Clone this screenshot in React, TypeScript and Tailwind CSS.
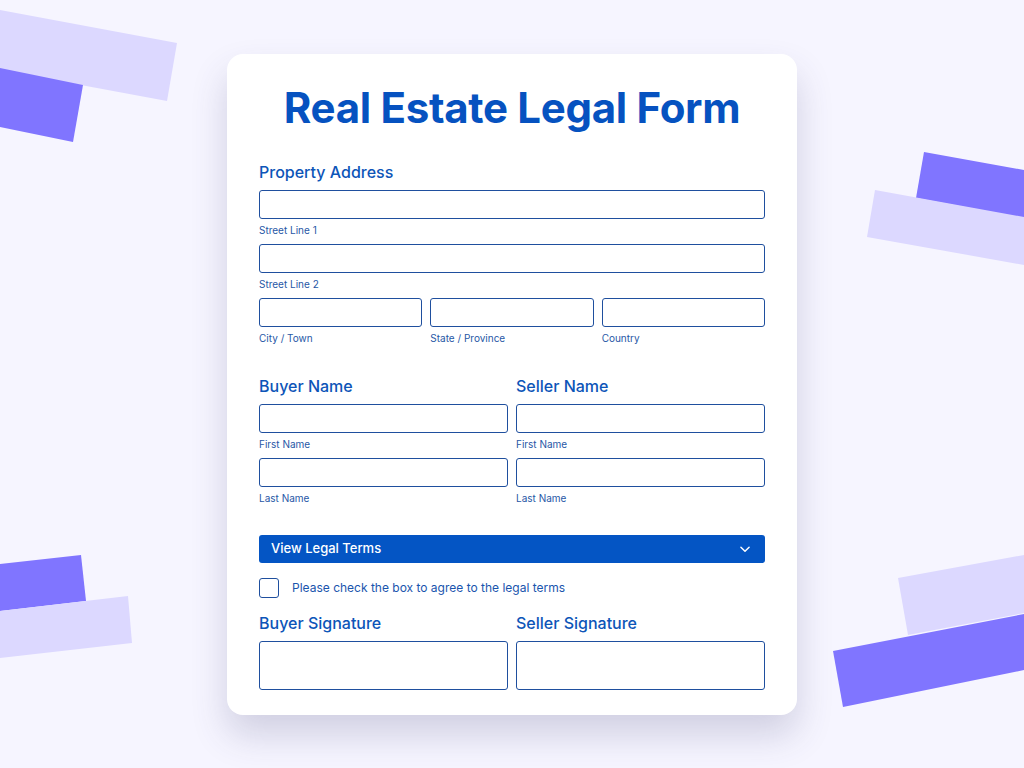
import React from 'react';

const font = { fontFamily: 'Inter, "Noto Sans", sans-serif' };

const Field: React.FC<{ label?: string; tall?: boolean }> = ({ label, tall }) => (
  <div className="flex flex-col">
    <div
      className={`${tall ? 'h-[49px]' : 'h-[29px]'} rounded-[3px] border-[1.5px] border-[#1f4f9e] bg-white`}
    />
    {label && (
      <span className="mt-[4px] text-[10px] leading-[14px] text-[#2757a6]">{label}</span>
    )}
  </div>
);

const Backdrop: React.FC = () => (
  <svg className="absolute inset-0 h-full w-full" viewBox="0 0 1024 768" preserveAspectRatio="none">
    <polygon points="0,10 177,43 167,101 0,70" fill="#dcd8ff" />
    <polygon points="0,68 83,85 73,142 0,127" fill="#8075ff" />
    <polygon points="924,152 1024,170 1024,218 916,198" fill="#8075ff" />
    <polygon points="875,190 1024,217 1024,265 867,237" fill="#dcd8ff" />
    <polygon points="0,564 81,555 86,601 0,611" fill="#8075ff" />
    <polygon points="0,611 128,596 132,643 0,658" fill="#dcd8ff" />
    <polygon points="898,578 1024,555 1024,613 908,635" fill="#dcd8ff" />
    <polygon points="833,651 1024,614 1024,670 843,707" fill="#8075ff" />
  </svg>
);

export default function App() {
  return (
    <div className="relative h-[768px] w-[1024px] overflow-hidden bg-[#f6f5ff]" style={font}>
      <Backdrop />
      <div className="relative flex justify-center pt-[54px]">
        <div className="w-[570px] rounded-[16px] bg-white px-[32px] pb-[25px] pt-[29px] shadow-[0_20px_36px_rgba(60,60,110,0.2)]">
          <h1 className="text-center text-[42px] font-bold leading-[50px] tracking-[-0.3px] text-[#0652c0]">
            Real Estate Legal Form
          </h1>

          <div className="mt-[29px] text-[16px] font-medium leading-[20px] text-[#0d55b8]">Property Address</div>
          <div className="mt-[8px] flex flex-col gap-[7px]">
            <Field label="Street Line 1" />
            <Field label="Street Line 2" />
            <div className="grid grid-cols-3 gap-[8px]">
              <Field label="City / Town" />
              <Field label="State / Province" />
              <Field label="Country" />
            </div>
          </div>

          <div className="mt-[31px] grid grid-cols-2 gap-x-[8px]">
            {['Buyer Name', 'Seller Name'].map((t) => (
              <div key={t} className="flex flex-col">
                <div className="text-[16px] font-medium leading-[20px] text-[#0d55b8]">{t}</div>
                <div className="mt-[8px] flex flex-col gap-[7px]">
                  <Field label="First Name" />
                  <Field label="Last Name" />
                </div>
              </div>
            ))}
          </div>

          <button className="mt-[30px] flex h-[28px] w-full items-center justify-between rounded-[3px] bg-[#0455c4] pl-[12px] pr-[13px] text-[13px] font-medium text-white">
            <span>View Legal Terms</span>
            <svg width="14" height="14" viewBox="0 0 24 24" fill="none" stroke="white" strokeWidth="2.5" strokeLinecap="round" strokeLinejoin="round">
              <path d="M5 9l7 7 7-7" />
            </svg>
          </button>

          <label className="mt-[15px] flex items-center gap-[13px]">
            <span className="h-[20px] w-[20px] rounded-[3px] border-[1.5px] border-[#1f4f9e]" />
            <span className="text-[12px] leading-[16px] text-[#1a55ad]">Please check the box to agree to the legal terms</span>
          </label>

          <div className="mt-[15px] grid grid-cols-2 gap-x-[8px]">
            {['Buyer Signature', 'Seller Signature'].map((t) => (
              <div key={t} className="flex flex-col">
                <div className="text-[16px] font-medium leading-[20px] text-[#0d55b8]">{t}</div>
                <div className="mt-[8px]">
                  <Field tall />
                </div>
              </div>
            ))}
          </div>
        </div>
      </div>
    </div>
  );
}
